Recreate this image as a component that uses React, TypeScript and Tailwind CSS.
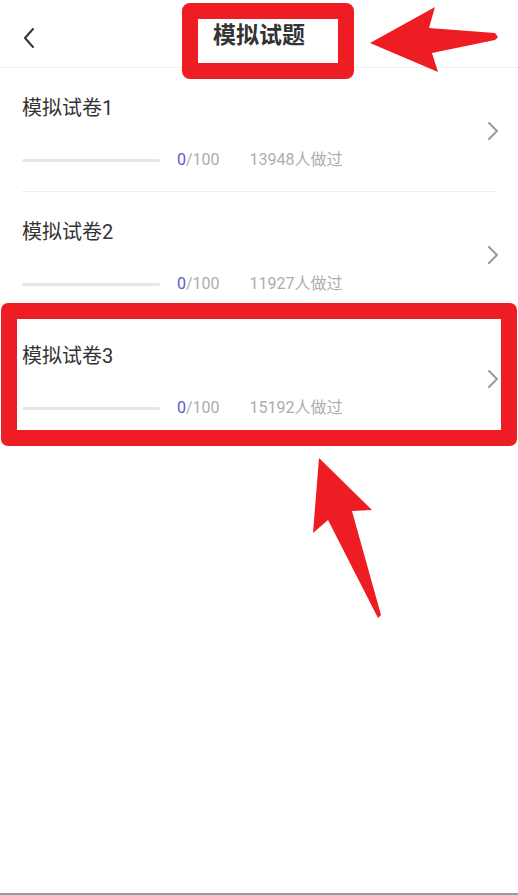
import React from 'react';

const papers = [
  { title: '模拟试卷1', score: 0, total: 100, count: 13948 },
  { title: '模拟试卷2', score: 0, total: 100, count: 11927 },
  { title: '模拟试卷3', score: 0, total: 100, count: 15192 },
];

const font = { fontFamily: 'Roboto, "Noto Sans CJK SC", sans-serif' };

const App = () => {
  return (
    <div
      className="relative h-[895px] w-full overflow-hidden bg-white border-b-2 border-[#9a9a9a]"
      style={font}
    >
      {/* Header */}
      <div className="relative flex h-[68px] items-center justify-center border-b border-[#f0f0f0]">
        <svg className="absolute left-[20px] top-[26px]" width="20" height="24" viewBox="0 0 20 24">
          <polyline points="13,3 5,12 13,21" fill="none" stroke="#333" strokeWidth="2" strokeLinecap="round" strokeLinejoin="round" />
        </svg>
        <h1 className="mt-[6px] text-[23px] font-bold text-[#333]">模拟试题</h1>
      </div>

      {/* List */}
      <div>
        {papers.map((p, i) => (
          <div key={i} className="px-[22px]">
            <div
              className={`flex items-center pt-[26px] pb-[20px] ${i < papers.length - 1 ? 'border-b border-[#eeeeee]' : ''}`}
            >
              <div className="flex-1">
                <div className="text-[20px] leading-[28px] text-[#333]">{p.title}</div>
                <div className="mt-[27px] flex h-[22px] items-center text-[16px] text-[#adadad]">
                  <div className="h-[3px] w-[138px] rounded-full bg-[#e6e6e6]" />
                  <span className="ml-[17px]">
                    <span className="text-[#5a5ac4]">{p.score}</span>/{p.total}
                  </span>
                  <span className="ml-[30px]">{p.count}人做过</span>
                </div>
              </div>
              <svg className="-mt-[4px] -mr-[5px]" width="16" height="20" viewBox="0 0 16 20">
                <polyline points="4,2 12,10 4,18" fill="none" stroke="#9a9a9a" strokeWidth="2" strokeLinecap="round" strokeLinejoin="round" />
              </svg>
            </div>
          </div>
        ))}
      </div>

      {/* Annotations */}
      <div className="absolute left-[182px] top-[3px] h-[76px] w-[172px] rounded-[8px] border-[16px] border-[#ee1d24]" />
      <div className="absolute left-[1px] top-[303px] h-[143px] w-[516px] rounded-[7px] border-[16px] border-[#ee1d24]" />
      <svg className="absolute left-0 top-0" width="518" height="895" viewBox="0 0 518 895">
        <polygon
          points="370,43 435,7 429,28 495,33 498,37 495,40 432,53 438,72"
          fill="#ee1d24"
        />
        <polygon
          points="319,458 372,510 352,511 381,615 378,618 328,520 313,533"
          fill="#ee1d24"
        />
      </svg>
    </div>
  );
};

export default App;
